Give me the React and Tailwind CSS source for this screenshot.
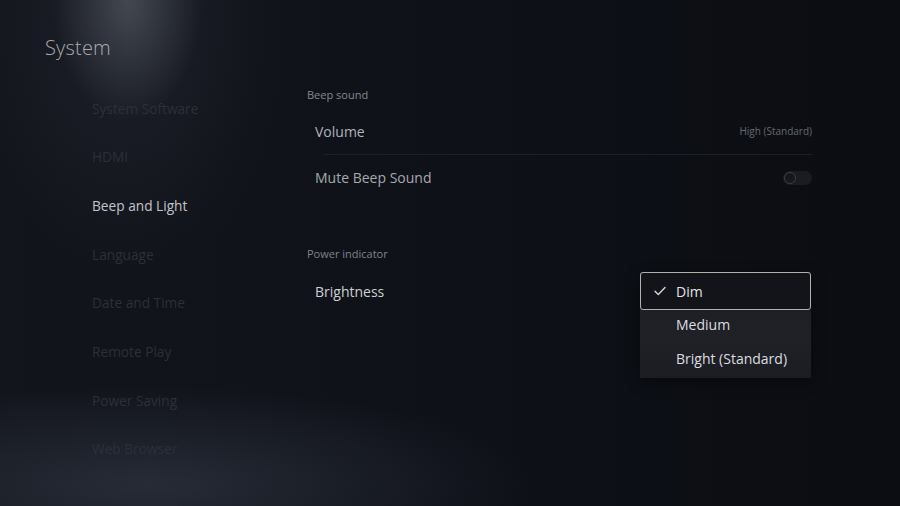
import React from "react";

const nav = [
  "System Software",
  "HDMI",
  "Beep and Light",
  "Language",
  "Date and Time",
  "Remote Play",
  "Power Saving",
  "Web Browser",
];

export default function App() {
  return (
    <div
      className="relative w-[900px] h-[506px] overflow-hidden flex bg-[#0d1016] bg-[radial-gradient(ellipse_75px_120px_at_128px_0px,rgba(160,165,175,0.30),transparent),radial-gradient(ellipse_160px_260px_at_130px_20px,rgba(90,96,110,0.16),transparent),radial-gradient(ellipse_380px_100px_at_150px_485px,rgba(70,76,92,0.42),transparent),linear-gradient(90deg,#12151c,#0e1118_50%,#0b0d12)]"
      style={{ fontFamily: '"Open Sans", "Noto Sans", sans-serif' }}
    >
      {/* Left column */}
      <div className="w-[307px] shrink-0 pl-[45px] pt-[36px] flex flex-col">
        <div className="text-[20px] leading-[24px] font-light text-[#a9abaf] tracking-[0.2px]">System</div>
        <div className="mt-[24.5px] flex flex-col">
          {nav.map((n) => (
            <div
              key={n}
              className={
                n === "Beep and Light"
                  ? "h-[48.7px] flex items-center pl-[47px] text-[13.7px] text-[#c3c5c8]"
                  : "h-[48.7px] flex items-center pl-[47px] text-[13.7px] text-[#2c3038]"
              }
            >
              {n}
            </div>
          ))}
        </div>
      </div>

      {/* Right column */}
      <div className="w-[505px] shrink-0 pt-[87px] flex flex-col relative">
        <div className="h-[16px] leading-[16px] text-[11px] text-[#858990]">Beep sound</div>
        <div className="mt-[6px] h-[45px] pl-[8px] flex items-center justify-between">
          <span className="text-[14px] text-[#b1b4b8]">Volume</span>
          <span className="text-[10px] text-[#676a70]">High (Standard)</span>
        </div>
        <div className="ml-[16px] h-px bg-[#1d2027]" />
        <div className="h-[45px] pl-[8px] flex items-center justify-between">
          <span className="text-[14px] text-[#a6a9ad]">Mute Beep Sound</span>
          <div className="w-[29px] h-[14px] rounded-full bg-[#1a1c21] flex items-center pl-[1px]">
            <div className="w-[12px] h-[12px] rounded-full border-[1.5px] border-[#3b3e44] bg-[#15171b]" />
          </div>
        </div>
        <div className="mt-[46px] h-[16px] leading-[16px] text-[11px] text-[#7f838a]">Power indicator</div>
        <div className="mt-[6px] h-[46px] pl-[8px] flex items-center">
          <span className="text-[14px] text-[#cdd0d3]">Brightness</span>
        </div>

        {/* Dropdown menu */}
        <div className="absolute left-[333px] top-[272px] w-[171px] h-[106px] bg-[#1b1d22] bg-[linear-gradient(180deg,#1b1d22,#1f2126_60%,#1b1d22)] shadow-[0_4px_14px_rgba(0,0,0,0.45)] flex flex-col">
          <div className="h-[38px] shrink-0 rounded-[3px] border-[1.5px] border-[#b4b0ac] bg-[#12141a] flex items-center pl-[13px]">
            <svg width="12" height="10" viewBox="0 0 12 10" fill="none" className="shrink-0">
              <path d="M1 5.2 L4.3 8.5 L11 1.5" stroke="#d8d8d8" strokeWidth="1.4" strokeLinecap="round" strokeLinejoin="round" />
            </svg>
            <span className="ml-[10px] text-[14px] text-[#e2e3e5]">Dim</span>
          </div>
          <div className="h-[28px] shrink-0 flex items-center pl-[36px] text-[14px] text-[#dcdde0]">Medium</div>
          <div className="h-[40px] shrink-0 flex items-center pl-[36px] text-[14px] text-[#dcdde0]">Bright (Standard)</div>
        </div>
      </div>
    </div>
  );
}
